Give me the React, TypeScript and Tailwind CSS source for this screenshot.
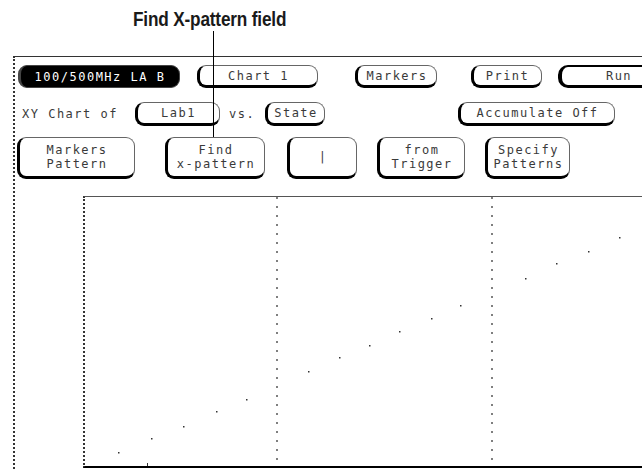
const mono = "font-['DejaVu_Sans_Mono',monospace] text-[12px] tracking-[1.5px] text-[#3a3a3a]";

const Btn = ({ w, h, children, className = "" }: { w: string; h: string; children: React.ReactNode; className?: string }) => (
    <div className={`${w} ${h} shrink-0 flex flex-col items-center justify-center leading-[14px] bg-white rounded-[9px] border border-[#666] border-l-[3px] border-l-black border-b-[3px] border-b-black ${mono} ${className}`}>
        {children}
    </div>
);

const dots = [
    [118, 453], [151, 439], [183, 427], [216, 412], [246, 400], [308, 372], [339, 358], [369, 346],
    [399, 332], [431, 319], [460, 306], [525, 279], [556, 264], [588, 252], [619, 238],
];

const App = () => {
    return (
        <div className="relative w-[642px] h-[470px] overflow-hidden bg-white">
            <div className="h-[56px] pl-[133px] pt-[4px]">
                <span className="inline-block origin-left scale-x-[0.86] font-['Liberation_Sans',sans-serif] font-bold text-[20px] tracking-[-0.2px] text-[#1a1a1a]">Find X-pattern field</span>
            </div>
            {/* leader line */}
            <div className="absolute left-[213px] top-[31px] w-[1px] h-[106px] bg-black" />

            <div className="ml-[13px] w-[720px] h-[420px] border-solid [border-left-style:dotted] border-l-2 border-l-[#333] border-t border-t-[#333]">
                <div className="flex mt-[8px] h-[23px]">
                    <div className="ml-[3px] w-[162px] h-[23px] shrink-0 flex items-center justify-center rounded-[9px] bg-black border border-[#444] border-l-[3px] font-['DejaVu_Sans_Mono',monospace] text-[12px] tracking-[1.5px] text-white">100/500MHz LA B</div>
                    <Btn w="w-[121px] ml-[17px]" h="h-[23px]">Chart 1</Btn>
                    <Btn w="w-[82px] ml-[37px]" h="h-[23px]">Markers</Btn>
                    <Btn w="w-[71px] ml-[34px]" h="h-[23px]">Print</Btn>
                    <Btn w="w-[120px] ml-[16px]" h="h-[23px]" className="border-2 border-black border-l-[4px] rounded-[10px]">Run</Btn>
                </div>
                <div className="flex items-center mt-[14px] h-[24px]">
                    <span className={`ml-[7px] w-[113px] shrink-0 ${mono}`}>XY Chart of</span>
                    <Btn w="w-[85px]" h="h-[24px]">Lab1</Btn>
                    <span className={`ml-[9px] w-[36px] shrink-0 ${mono}`}>vs.</span>
                    <Btn w="w-[60px]" h="h-[24px]">State</Btn>
                    <Btn w="w-[157px] ml-[133px]" h="h-[24px]">Accumulate Off</Btn>
                </div>
                <div className="flex mt-[11px] h-[42px]">
                    <Btn w="w-[118px] ml-[2px]" h="h-[42px]"><span>Markers</span><span>Pattern</span></Btn>
                    <Btn w="w-[100px] ml-[30px]" h="h-[42px]"><span>Find</span><span>x-pattern</span></Btn>
                    <Btn w="w-[70px] ml-[22px]" h="h-[42px]">|</Btn>
                    <Btn w="w-[88px] ml-[20px]" h="h-[42px]"><span>from</span><span>Trigger</span></Btn>
                    <Btn w="w-[85px] ml-[20px]" h="h-[42px]"><span>Specify</span><span>Patterns</span></Btn>
                </div>
                <div className="ml-[68px] mt-[17px] w-[600px] h-[272px] border-solid [border-left-style:dotted] border-l-2 border-l-[#333] border-t border-t-[#555] border-b-2 border-b-black">
                    <svg width="600" height="269" className="block">
                        <line x1="192" y1="0" x2="192" y2="269" stroke="#555" strokeWidth="1.5" strokeDasharray="2 7" />
                        <line x1="407" y1="0" x2="407" y2="269" stroke="#555" strokeWidth="1.5" strokeDasharray="2 7" />
                        {dots.map(([x, y]) => (
                            <rect key={x} x={x - 85} y={y - 198} width="1.5" height="1.5" fill="#333" />
                        ))}
                        <rect x={62} y={266} width="1" height="3" fill="#333" />
                    </svg>
                </div>
            </div>
        </div>
    );
};

export default App;
